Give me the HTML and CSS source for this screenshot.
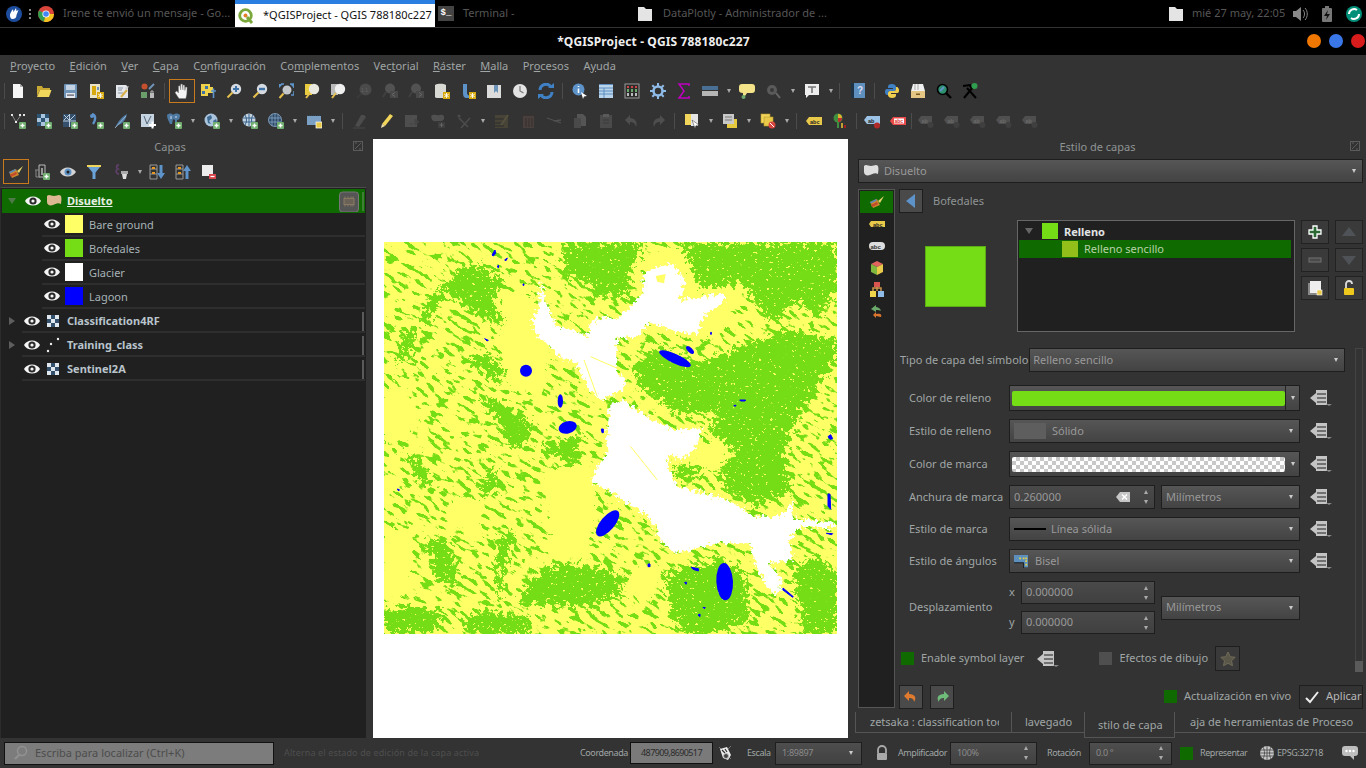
FILE: index.html
```html
<!DOCTYPE html>
<html lang="es">
<head>
  <meta charset="UTF-8">
  <title>*QGISProject - QGIS 788180c227</title>
  <link rel="stylesheet" href="styles.css">
</head>
<body>

<svg class="sprite" xmlns="http://www.w3.org/2000/svg">
  <symbol id="b-plus" viewBox="0 0 16 16"><rect x="9" y="9" width="7" height="7" rx="1" fill="#6fae6f"/><path d="M12.5 10.5v4M10.5 12.5h4" stroke="#fff" stroke-width="1.4"/></symbol>
  <symbol id="b-star" viewBox="0 0 16 16"><rect x="9" y="9" width="7" height="7" fill="#d8a90f"/><path d="M12.5 10v5M10.3 11.2l4.4 2.6M14.7 11.2l-4.4 2.6" stroke="#fff" stroke-width=".9"/></symbol>
  <symbol id="i-new" viewBox="0 0 16 16"><path d="M3 1h7l3 3v11H3z" fill="#f5f5f5"/><path d="M10 1v3h3z" fill="#aaa"/></symbol>
  <symbol id="i-open" viewBox="0 0 16 16"><path d="M1 3h5l1 2h7v2H4l-3 6z" fill="#c9a834"/><path d="M4 7h11.5L13 14H1z" fill="#f1d65c"/></symbol>
  <symbol id="i-save" viewBox="0 0 16 16"><rect x="2" y="1" width="13" height="14" rx="1" fill="#7094b8"/><rect x="4" y="2" width="9" height="5" fill="#c3d3e3"/><rect x="4" y="10" width="9" height="5" fill="#e4e8ec"/><rect x="5" y="11.5" width="7" height="1.2" fill="#556"/></symbol>
  <symbol id="i-layoutnew" viewBox="0 0 16 16"><path d="M2 1h10v14H2z" fill="#e9e3c8"/><path d="M4 3h4v9H4z" fill="#d8a90f"/><path d="M9 4h2v3H9z" fill="#6b93b8"/><use href="#b-star"/></symbol>
  <symbol id="i-layoutman" viewBox="0 0 16 16"><path d="M2 2h10l2 2v11H2z" fill="#e3e6ea"/><path d="M4 5h5M4 7h4M4 10h5" stroke="#8a97a5"/><path d="M7 14l6-7" stroke="#d8b04a" stroke-width="2"/><path d="M11 5l4-2-2 4z" fill="#ccc"/></symbol>
  <symbol id="i-styleman" viewBox="0 0 16 16"><circle cx="4.5" cy="3.5" r="3" fill="#c4502e"/><rect x="1" y="9" width="6" height="6" fill="#6c9e6c"/><path d="M9 6l5-5" stroke="#7094b8" stroke-width="2"/><path d="M10 10h4v5h-4z" fill="#bbb"/><path d="M11 10V8h2v2" fill="none" stroke="#bbb"/></symbol>
  <symbol id="i-hand" viewBox="0 0 16 16"><path d="M5 15.500L1 9.500 2.800 8 4.500 10V3l1.500-.3L6.700 7V1.200L8.300 1 9 7V2l1.500.2.400 5.400.7-3.600 1.500.3-.3 6.700-1 4.500z" fill="#f4f4f4" stroke="#777" stroke-width=".4"/></symbol>
  <symbol id="i-pansel" viewBox="0 0 16 16"><path d="M1 1h9v3h3v6H8v3H1z" fill="#efd44b"/><path d="M5 3h3v3H5zM2 8h3v3H2z" fill="#3f73a8"/><path d="M11 8h5M13.5 5.5V11M13.5 11v4" stroke="#5d93c9" stroke-width="1.6"/></symbol>
  <symbol id="i-zoomin" viewBox="0 0 16 16"><circle cx="10" cy="6" r="5.2" fill="#d5dbe1"/><path d="M6.5 9.5L1.5 14.5" stroke="#e6c04d" stroke-width="2"/><path d="M10 3v6M7 6h6" stroke="#3f73a8" stroke-width="2"/></symbol>
  <symbol id="i-zoomout" viewBox="0 0 16 16"><circle cx="10" cy="6" r="5.2" fill="#d5dbe1"/><path d="M6.5 9.5L1.5 14.5" stroke="#e6c04d" stroke-width="2"/><path d="M7 6h6" stroke="#3f73a8" stroke-width="2.4"/></symbol>
  <symbol id="i-zoomfull" viewBox="0 0 16 16"><circle cx="9" cy="7" r="4.5" fill="#c3c7cb"/><path d="M1 1l4 0-4 4zM16 1v4l-4-4zM16 12v-4" fill="#5d93c9"/><path d="M12 1h4v4M3 1h3M16 8v4h-3" stroke="#5d93c9" stroke-width="1.6" fill="none"/><path d="M5.5 10.5L1.5 15" stroke="#e6c04d" stroke-width="2"/></symbol>
  <symbol id="i-zoomsel" viewBox="0 0 16 16"><path d="M1 1h7v11H1z" fill="#e9cd3f"/><circle cx="10" cy="6" r="5.2" fill="#e9e9e0"/><path d="M6 10l-4 5" stroke="#e6c04d" stroke-width="2"/></symbol>
  <symbol id="i-zoomlayer" viewBox="0 0 16 16"><path d="M1 1h7v11H1z" fill="#bbb"/><circle cx="10" cy="6" r="5.2" fill="#efefef"/><path d="M6 10l-4 5" stroke="#e6c04d" stroke-width="2"/></symbol>
  <symbol id="i-zoom11" viewBox="0 0 16 16"><circle cx="9.5" cy="6.5" r="6" fill="#4a4a4a"/><path d="M5 11l-4 4" stroke="#3a3a3a" stroke-width="2"/><text x="5" y="9" class="tiny">1:1</text></symbol>
  <symbol id="i-zoomprev" viewBox="0 0 16 16"><circle cx="8" cy="5.5" r="5" fill="#525252"/><path d="M4 9l-3 5" stroke="#404040" stroke-width="2"/><rect x="8" y="8" width="8" height="7" fill="#484848"/><path d="M13 9.5l-3 2 3 2" stroke="#666" fill="none"/></symbol>
  <symbol id="i-zoomnext" viewBox="0 0 16 16"><circle cx="8" cy="5.5" r="5" fill="#525252"/><path d="M4 9l-3 5" stroke="#404040" stroke-width="2"/><rect x="8" y="8" width="8" height="7" fill="#484848"/><path d="M11 9.5l3 2-3 2" stroke="#666" fill="none"/></symbol>
  <symbol id="i-mapnew" viewBox="0 0 16 16"><path d="M1 2c4-2 9-1 11 0v13H3c-2 0-2-1-2-2z" fill="#d9d9d4"/><use href="#b-star"/></symbol>
  <symbol id="i-booknew" viewBox="0 0 16 16"><path d="M3 1h4v9c0 2 2 3 5 3v2H7c-3 0-4-2-4-5z" fill="#5d93c9"/><use href="#b-star"/></symbol>
  <symbol id="i-bookshow" viewBox="0 0 16 16"><path d="M1 2h14v13H1z" fill="#dcdcdc"/><path d="M8 2h4v8l-2-2-2 2z" fill="#6b93b8"/></symbol>
  <symbol id="i-clock" viewBox="0 0 16 16"><circle cx="8" cy="8" r="7" fill="#e3e3e3"/><path d="M8 3v5l3.5 2" stroke="#777" fill="none" stroke-width="1.2"/></symbol>
  <symbol id="i-refresh" viewBox="0 0 16 16"><path d="M2 7a6 6 0 0 1 11-3" stroke="#3f81c4" stroke-width="3" fill="none"/><path d="M14 9a6 6 0 0 1-11 3" stroke="#3f81c4" stroke-width="3" fill="none"/><path d="M10 5h6V0zM6 11H0v5z" fill="#3f81c4"/></symbol>
  <symbol id="i-identify" viewBox="0 0 16 16"><circle cx="6.5" cy="6.5" r="6" fill="#5d93c9"/><path d="M6.5 3v1M6.5 5.5V10" stroke="#fff" stroke-width="1.6"/><path d="M9 9l6 4-3 .5-1 2.5z" fill="#fff"/></symbol>
  <symbol id="i-table" viewBox="0 0 16 16"><rect x="1" y="1" width="14" height="14" fill="#b9d3ea"/><path d="M1 1.5h14M1 5h14M1 8h14M1 11h14M6 5v10" stroke="#5d8fbf"/></symbol>
  <symbol id="i-stats" viewBox="0 0 16 16"><rect x="1" y="1" width="14" height="14" fill="#2c2c2c" stroke="#999"/><path d="M4 3v2M8 3v2M12 3v2" stroke="#c44" stroke-width="2"/><path d="M4 6v3M8 6v3M12 6v3" stroke="#6ba86b" stroke-width="2"/><path d="M4 10v3M8 10v3M12 10v3" stroke="#bbb" stroke-width="2"/></symbol>
  <symbol id="i-gear" viewBox="0 0 16 16"><circle cx="8" cy="8" r="4.5" fill="none" stroke="#8fbbe8" stroke-width="2.6"/><path d="M8 0v3M8 13v3M0 8h3M13 8h3M2.3 2.3l2 2M11.7 11.7l2 2M13.7 2.3l-2 2M4.3 11.7l-2 2" stroke="#8fbbe8" stroke-width="2"/></symbol>
  <symbol id="i-sigma" viewBox="0 0 16 16"><path d="M13 3V1H3l5 7-5 7h10v-2" fill="none" stroke="#c000c0" stroke-width="1.5"/></symbol>
  <symbol id="i-ruler" viewBox="0 0 16 16"><rect x="0" y="3" width="16" height="4" fill="#4a6f94"/><rect x="0" y="8" width="16" height="5" fill="#b5b5b5"/></symbol>
  <symbol id="i-tip" viewBox="0 0 16 16"><path d="M3 1h10c2 0 3 1 3 3v3c0 2-1 3-3 3H8l-2 3H4v-3c-3 0-4-1-4-3V4c0-2 1-3 3-3z" fill="#f5e389"/><circle cx="4.5" cy="14" r="2" fill="#6ba86b"/></symbol>
  <symbol id="i-gearoff" viewBox="0 0 16 16"><circle cx="7" cy="7" r="5" fill="#5a5a5a"/><circle cx="7" cy="7" r="2" fill="#383838"/><path d="M11 10l4 5" stroke="#666" stroke-width="2"/></symbol>
  <symbol id="i-note" viewBox="0 0 16 16"><path d="M1 1h14v11H5l-3 3v-3H1z" fill="#eeeeee"/><path d="M4 4h8M8 4v6" stroke="#777" stroke-width="1.6"/></symbol>
  <symbol id="i-help" viewBox="0 0 16 16"><rect x="1" y="0" width="14" height="15" fill="#1f3347"/><rect x="4" y="0" width="11" height="15" fill="#5d8fbf"/><text x="7" y="11" class="helpq">?</text></symbol>
  <symbol id="i-python" viewBox="0 0 16 16"><path d="M8 1c-3 0-4 1-4 3v1h5v1H3C1 6 1 8 1 9s1 3 2 3h1v-2c0-1 1-2 2-2h4c1 0 2-1 2-2V4c0-2-2-3-4-3z" fill="#3f81c4"/><path d="M8 15c3 0 4-1 4-3v-1H7v-1h6c2 0 2-2 2-3s-1-3-2-3h-1v2c0 1-1 2-2 2H6c-1 0-2 1-2 2v2c0 2 2 3 4 3z" fill="#f0cf4e"/></symbol>
  <symbol id="i-plugin" viewBox="0 0 16 16"><path d="M1 8h14v7H1z" fill="#e5c584"/><path d="M3 1h10l2 7H1z" fill="#f0f0f0"/><path d="M5 1v6M8 1v6" stroke="#aaa"/><rect x="6" y="10.5" width="4" height="1.5" fill="#7a5a20"/></symbol>
  <symbol id="i-lens" viewBox="0 0 16 16"><circle cx="6.5" cy="6.5" r="5" fill="#2f8f6f" stroke="#000" stroke-width="1.6"/><path d="M4 8l4-4" stroke="#5d93c9" stroke-width="2"/><path d="M10 10l5 5" stroke="#000" stroke-width="2.4"/></symbol>
  <symbol id="i-tools" viewBox="0 0 16 16"><path d="M2 15L11 4M14 15L5 5" stroke="#000" stroke-width="2"/><path d="M1 3l7-1 1 3" stroke="#000" stroke-width="2" fill="none"/><circle cx="12.5" cy="3" r="3" fill="#2f9f4f"/></symbol>

  <symbol id="i-vnew" viewBox="0 0 16 16"><path d="M2 2l4 7 5-7" stroke="#aaa" fill="none" stroke-width=".7"/><path d="M1 1h2v2H1zM5 8h2v2H5zM9 1h2v2H9zM13 1h2v2h-2z" fill="#e5e5e5"/><use href="#b-plus"/></symbol>
  <symbol id="i-rnew" viewBox="0 0 16 16"><path d="M1 1h4v4H1zM9 1h4v4H9zM5 5h4v4H5zM1 9h4v4H1zM9 9h4v4H9z" fill="#2f5575"/><path d="M5 1h4v4H5zM1 5h4v4H1zM9 5h4v4H9zM5 9h4v4H5z" fill="#a9c4dc"/><use href="#b-plus"/></symbol>
  <symbol id="i-mesh" viewBox="0 0 16 16"><rect x="1" y="1" width="13" height="13" fill="#34506c"/><path d="M1 8h13M7.5 1v13M2 2l5 5M7 2L2 7M8 7l5-5" stroke="#bcd" fill="none"/><use href="#b-plus"/></symbol>
  <symbol id="i-hook" viewBox="0 0 16 16"><path d="M4 1c4 1 4 6 1 10" fill="none" stroke="#5d93c9" stroke-width="2.4"/><circle cx="4" cy="3" r="2" fill="#5d93c9"/><use href="#b-plus"/></symbol>
  <symbol id="i-feather" viewBox="0 0 16 16"><path d="M1 15c2-5 6-11 12-14-1 5-4 10-9 11z" fill="#4e7aa3"/><path d="M1 15L12 3" stroke="#cde" stroke-width=".6"/><use href="#b-plus"/></symbol>
  <symbol id="i-vnewb" viewBox="0 0 16 16"><rect x="1" y="1" width="13" height="13" fill="#c6d4e2"/><path d="M4 3l3 8 4-8" stroke="#567" fill="none"/><path d="M9 12h7M12.5 8.5v7" stroke="#fff" stroke-width="2"/></symbol>
  <symbol id="i-pg" viewBox="0 0 16 16"><path d="M1 2c2-2 5-2 6 0 2-2 5-2 7 0 0 3-1 5-3 5v3H9V7L7 6 6 11H4C3 8 1 6 1 2z" fill="#4e7aa3"/><path d="M5 3v3M10 3v2" stroke="#cde"/><use href="#b-plus"/></symbol>
  <symbol id="i-globe" viewBox="0 0 16 16"><circle cx="7" cy="7" r="6.5" fill="#a9c4dc"/><path d="M3 4l4-2 1 3-3 3 2 3-3-1zM9 8l3-2 1 3-2 3z" fill="#3f6a92"/><use href="#b-plus"/></symbol>
  <symbol id="i-wms" viewBox="0 0 16 16"><circle cx="7" cy="7" r="6.5" fill="#c6d4e2"/><path d="M1 5h12M1 9h12M7 1v12M3 2c2 3 2 7 0 10M11 2c-2 3-2 7 0 10" stroke="#35608a" fill="none"/><use href="#b-plus"/></symbol>
  <symbol id="i-wcs" viewBox="0 0 16 16"><circle cx="7" cy="7" r="6.5" fill="#2e4a66" stroke="#8fb0d0" stroke-width=".8"/><path d="M1 5h12M1 9h12M4 1v12M7 1v12M10 1v12" stroke="#8fb0d0" stroke-width=".7"/><use href="#b-plus"/></symbol>
  <symbol id="i-temp" viewBox="0 0 16 16"><rect x="1" y="3" width="14" height="9" fill="#7c9fc4"/><path d="M1 2.500h14" stroke="#345" stroke-dasharray="1 1"/><rect x="10" y="9" width="6" height="6" fill="#e9c94a" stroke="#fff" stroke-width=".7"/></symbol>
  <symbol id="i-editall" viewBox="0 0 16 16"><path d="M3 13L9 2h3l2 2-7 10z" fill="#4c4c4c"/><path d="M1 15h12" stroke="#424242" stroke-width="1.5"/></symbol>
  <symbol id="i-pencil" viewBox="0 0 16 16"><path d="M4 11L12 1l3 2-8 10z" fill="#f2d65c"/><path d="M4 11l-1 4 4-2z" fill="#f0e0b0"/></symbol>
  <symbol id="i-saveedit" viewBox="0 0 16 16"><rect x="1" y="2" width="12" height="12" fill="#4e4e4e"/><path d="M11 6l4 3-4 3zM5 11h4" fill="#444" stroke="#444"/></symbol>
  <symbol id="i-addpoly" viewBox="0 0 16 16"><path d="M1 3c3-3 6 0 9-1s5 1 4 4-5 2-6 2-4 1-6-1z" fill="#505050"/><rect x="8" y="9" width="7" height="6" fill="#3e3e3e"/><path d="M11.500 10v4M9.500 12h4" stroke="#666"/></symbol>
  <symbol id="i-vtool" viewBox="0 0 16 16"><path d="M5 15L14 5M3 5l9 9" stroke="#4c4c4c" stroke-width="1.6"/><circle cx="3" cy="3" r="1.500" fill="#4c4c4c"/></symbol>
  <symbol id="i-multi" viewBox="0 0 16 16"><rect x="1" y="2" width="13" height="13" fill="#474337"/><path d="M1 6h9M1 10h7M1 13h9" stroke="#2c2c2c"/><path d="M7 12L14 2" stroke="#55513f" stroke-width="2"/></symbol>
  <symbol id="i-trash" viewBox="0 0 16 16"><rect x="3" y="3" width="11" height="12" fill="#493f3c"/><path d="M1 2h14M6 5v9M9 5v9M12 5v9" stroke="#3a3230" stroke-width="1.200"/></symbol>
  <symbol id="i-cut" viewBox="0 0 16 16"><path d="M1 5l14 5M8 8l7-1" stroke="#505050" stroke-width="1.300"/></symbol>
  <symbol id="i-copy" viewBox="0 0 16 16"><path d="M5 1h6l3 3v9H5z" fill="#555"/><path d="M2 5h7v10H2z" fill="#4a4a4a"/></symbol>
  <symbol id="i-paste" viewBox="0 0 16 16"><rect x="2" y="2" width="12" height="13" fill="#4a4a4a"/><rect x="5" y="1" width="6" height="3" fill="#5a5a5a"/><path d="M5 7h6M5 10h6" stroke="#3a3a3a"/></symbol>
  <symbol id="i-undooff" viewBox="0 0 16 16"><path d="M6 2L1 7l5 5V9c3 0 5 1 6 5 2-5-1-9-6-9z" fill="#4e4e4e"/></symbol>
  <symbol id="i-redooff" viewBox="0 0 16 16"><path d="M10 2l5 5-5 5V9c-3 0-5 1-6 5-2-5 1-9 6-9z" fill="#4e4e4e"/></symbol>
  <symbol id="i-selrect" viewBox="0 0 16 16"><rect x="1" y="1" width="10" height="11" fill="#f2d65c"/><rect x="7" y="1" width="7" height="12" fill="#e5e5e5"/><path d="M8 7l7 5-3 .5-1 3z" fill="#fff" stroke="#333" stroke-width=".5"/></symbol>
  <symbol id="i-selval" viewBox="0 0 16 16"><rect x="5" y="6" width="10" height="9" fill="#e4c83e"/><rect x="1" y="1" width="11" height="10" fill="#c8c8c8"/><path d="M3 4h7M3 7h7" stroke="#777"/></symbol>
  <symbol id="i-desel" viewBox="0 0 16 16"><rect x="1" y="1" width="9" height="9" fill="#f2d65c" stroke="#b59a2a" stroke-width=".6"/><rect x="4" y="4" width="9" height="9" fill="#e9c94a" stroke="#b59a2a" stroke-width=".6"/><circle cx="12" cy="12" r="3.500" fill="#d9453f"/><path d="M10 10l4 4" stroke="#fff"/></symbol>
  <symbol id="i-lblcfg" viewBox="0 0 16 16"><path d="M0 8l3-4h13v8H3z" fill="#e9c94a"/><text x="4" y="10.500" class="tinyb">abc</text></symbol>
  <symbol id="i-diagram" viewBox="0 0 16 16"><circle cx="6" cy="5" r="4.500" fill="#3f8f3f"/><path d="M6 5V1a4 4 0 0 1 4 4z" fill="#e0b030"/><path d="M6 5h4a4 4 0 0 1-4 4z" fill="#c03030"/><path d="M5 9h2v6H5z" fill="#3f8f3f"/><path d="M9 10h2v5H9z" fill="#c0a030"/><path d="M12 12h2v3h-2z" fill="#a02020"/></symbol>
  <symbol id="i-lblpin" viewBox="0 0 16 16"><path d="M0 7l3-4h13v8H3z" fill="#9cc2e6"/><text x="4" y="9.500" class="tinyb">ab</text><circle cx="13" cy="12.500" r="3" fill="#b02a2a"/></symbol>
  <symbol id="i-lblred" viewBox="0 0 16 16"><path d="M0 8l3-4h13v8H3z" fill="#ea4a4a"/><rect x="4" y="5.500" width="10" height="5" fill="#fff"/><text x="4.500" y="10" class="tinyr">abc</text></symbol>
  <symbol id="i-lbloff" viewBox="0 0 16 16"><path d="M0 7l3-4h11v8H3z" fill="#4f4f4f"/><text x="3.500" y="9.500" class="tinyd">ab</text><circle cx="12.500" cy="12" r="3" fill="#3f3f3f"/></symbol>
  <symbol id="i-layerbrush" viewBox="0 0 16 16"><path d="M1 8l7-3 3 6-7 3z" fill="#c8862f"/><path d="M2 11l6-3 1 2-6 3z" fill="#c24a2a"/><path d="M1 8l6-3 .8 1.600-6 3z" fill="#5d86b4"/><path d="M9 7l6-5-4 7z" fill="#e6d26a"/></symbol>
  <symbol id="i-addgroup" viewBox="0 0 16 16"><path d="M5 1h6v12H5z" fill="none" stroke="#bbb"/><path d="M1 6h4M2 6v7h4" stroke="#888" fill="none"/><path d="M7 4h2v7H7z" fill="#999"/><use href="#b-plus"/></symbol>
  <symbol id="i-eyeblue" viewBox="0 0 16 16"><path d="M0 8c3-6 12-6 16 0-4 6-13 6-16 0z" fill="#d4d4d4"/><circle cx="8" cy="8" r="3.500" fill="#5d93c9"/><circle cx="8" cy="8" r="1.500" fill="#222"/></symbol>
  <symbol id="i-funnel" viewBox="0 0 16 16"><rect x="1" y="1" width="14" height="2" fill="#f1d65c"/><path d="M2 3h12L9.500 8.500V15h-3V8.500z" fill="#6ba3d8"/></symbol>
  <symbol id="i-filteroff" viewBox="0 0 16 16"><path d="M6 1C3 1 3 4 5 5 2 6 3 10 6 10" fill="none" stroke="#5c3f66" stroke-width="1.800"/><rect x="8" y="7" width="7" height="3" fill="#aaa"/><path d="M9 10h5l-1 5h-3z" fill="#ddd"/></symbol>
  <symbol id="i-expand" viewBox="0 0 16 16"><path d="M1 1h7v14H1z" fill="none" stroke="#999"/><path d="M1 5h7M1 10h7" stroke="#999"/><path d="M3 3h3v2H3zM3 8h3v2H3z" fill="#e89a20"/><path d="M12 1v9" stroke="#5d93c9" stroke-width="3"/><path d="M8 9h8l-4 6z" fill="#5d93c9"/></symbol>
  <symbol id="i-collapse" viewBox="0 0 16 16"><path d="M1 1h7v14H1z" fill="none" stroke="#999"/><path d="M1 5h7M1 10h7" stroke="#999"/><path d="M3 3h3v2H3zM3 8h3v2H3z" fill="#e89a20"/><path d="M12 6v9" stroke="#5d93c9" stroke-width="3"/><path d="M8 7h8l-4-6z" fill="#5d93c9"/></symbol>
  <symbol id="i-remove" viewBox="0 0 16 16"><rect x="1" y="1" width="11" height="11" fill="#ececec"/><rect x="8" y="10" width="7" height="5" fill="#d9454f"/><path d="M9.500 12.500h4" stroke="#fff" stroke-width="1.200"/></symbol>
  <symbol id="i-undock" viewBox="0 0 10 10"><rect x=".5" y=".5" width="9" height="9" fill="none" stroke="#5c5c5c"/><path d="M2 8l6-6M2 2h2M8 8H6" stroke="#5c5c5c"/></symbol>
  <symbol id="i-eye" viewBox="0 0 16 16"><path d="M0 8c3-6 13-6 16 0-3 6-13 6-16 0z" fill="#f5f5f5"/><circle cx="8" cy="8" r="3.600" fill="#2a2a2a"/><circle cx="8" cy="8" r="1.600" fill="#f5f5f5"/></symbol>
  <symbol id="i-poly" viewBox="0 0 16 16"><path d="M1 3c2-2 4 0 7 0s5-2 7 0c1 3 0 6 0 8-3-2-6 0-8 1-3 1-6 0-6-3z" fill="currentColor"/></symbol>
  <symbol id="i-raster" viewBox="0 0 16 16"><path d="M2 2h4v4H2zM10 2h4v4h-4zM6 6h4v4H6zM2 10h4v4H2zM10 10h4v4h-4z" fill="#dfe7ef"/><path d="M6 2h4v4H6zM2 6h4v4H2zM10 6h4v4h-4zM6 10h4v4H6z" fill="#35506c"/></symbol>
  <symbol id="i-points" viewBox="0 0 16 16"><circle cx="3" cy="14" r="1.200" fill="#eee"/><circle cx="6" cy="7" r="1.200" fill="#eee"/><circle cx="13" cy="2" r="1.200" fill="#eee"/></symbol>
  <symbol id="i-memory" viewBox="0 0 20 20"><rect x=".5" y=".5" width="19" height="20" rx="3" fill="#555" stroke="#777"/><rect x="5" y="7" width="10" height="6" fill="#6b6257" stroke="#8a7a63"/><path d="M6 5v2M9 5v2M12 5v2M14 5v2M6 13v2M9 13v2M12 13v2M14 13v2" stroke="#8a7a63"/></symbol>

  <symbol id="i-labels" viewBox="0 0 16 16"><path d="M0 8l2-3h14v6H2z" fill="#e9c94a"/><text x="4" y="10.500" class="tinyb">abc</text></symbol>
  <symbol id="i-mask" viewBox="0 0 16 16"><rect x="0" y="4" width="16" height="8" rx="4" fill="#ddd"/><text x="1.500" y="11" class="tinym">abc</text></symbol>
  <symbol id="i-cube" viewBox="0 0 16 16"><path d="M8 1l6 3-6 3-6-3z" fill="#e0655f"/><path d="M2 4l6 3v8l-6-3z" fill="#7fb83c"/><path d="M14 4L8 7v8l6-3z" fill="#e9c94a"/></symbol>
  <symbol id="i-tree" viewBox="0 0 16 16"><rect x="5" y="0" width="6" height="5" fill="#d9554f"/><path d="M4 9V6h8v3M8 5v4" stroke="#c9944a" fill="none" stroke-width="1.500"/><rect x="1" y="9" width="6" height="6" fill="#efd44b"/><rect x="9" y="9" width="6" height="6" fill="#8fbbe8"/></symbol>
  <symbol id="i-undored" viewBox="0 0 16 16"><path d="M7 1L2 5l5 3V6c2 0 4 0 5 1-1-3-3-4-5-4z" fill="#6ba86b"/><path d="M7 8l-3 3 3 3v-2c2 0 3 1 5 1 1-2 0-4-5-3z" fill="#d9752f"/></symbol>
  <symbol id="i-back" viewBox="0 0 16 16"><path d="M12 1v14L3 8z" fill="#5d93c9"/></symbol>
  <symbol id="i-plusw" viewBox="0 0 16 16"><path d="M6 2h4v4h4v4h-4v4H6v-4H2V6h4z" fill="#2a6b35" stroke="#fff" stroke-width="1.300"/></symbol>
  <symbol id="i-minusg" viewBox="0 0 16 16"><rect x="2" y="6" width="12" height="4" fill="#4a4a4a" stroke="#707070"/></symbol>
  <symbol id="i-up" viewBox="0 0 16 16"><path d="M8 3l7 9H1z" fill="#4f5358"/></symbol>
  <symbol id="i-down" viewBox="0 0 16 16"><path d="M8 13L1 4h14z" fill="#4f5358"/></symbol>
  <symbol id="i-dup" viewBox="0 0 16 16"><rect x="1" y="3" width="11" height="12" fill="#888"/><rect x="3" y="1" width="11" height="12" fill="#eee"/><rect x="10" y="10" width="5" height="5" fill="#e9c94a" stroke="#fff" stroke-width=".6"/></symbol>
  <symbol id="i-lock" viewBox="0 0 16 16"><path d="M5 8V4a3 3 0 0 1 6 0" fill="none" stroke="#ddd" stroke-width="1.800"/><rect x="3" y="8" width="10" height="7" rx="1" fill="#efc81e"/></symbol>
  <symbol id="i-dd" viewBox="0 0 23 16"><path d="M1 8l6-5V0h11v15H7v-2z" fill="#c4c4c4"/><path d="M8 4h9M8 8h9M8 12h9" stroke="#555" stroke-width="1.300"/><path d="M17 14h6l-3 2z" fill="#888"/></symbol>
  <symbol id="i-clear" viewBox="0 0 14 10"><path d="M0 5l4-5h10v10H4z" fill="#c6c6c6"/><path d="M6 2.500l5 5M11 2.500l-5 5" stroke="#fff" stroke-width="1.500"/></symbol>
  <symbol id="i-bevel" viewBox="0 0 16 16"><path d="M0 1h16v14h-5v-5H0z" fill="#5d8fbf"/><path d="M0 10h11v6" stroke="#111" fill="none"/><path d="M6 4h2v2H6zM10 4h2v2h-2zM13 4h2v2h-2zM13 7h2v2h-2zM13 11h2v2h-2z" fill="#e9d23e"/></symbol>
  <symbol id="i-star" viewBox="0 0 16 16"><path d="M8 1l2.200 4.700 5 .6-3.700 3.400 1 5L8 12.300l-4.500 2.400 1-5L.8 6.300l5-.6z" fill="#5b5748" stroke="#706b58"/></symbol>
  <symbol id="i-undo" viewBox="0 0 16 16"><path d="M6 2L1 7l5 5V9c3 0 5 1 5 4 3-4 1-8-5-8z" fill="#e07a2f"/></symbol>
  <symbol id="i-redo" viewBox="0 0 16 16"><path d="M10 2l5 5-5 5V9c-3 0-5 1-5 4-3-4-1-8 5-8z" fill="#6fbb7a"/></symbol>
  <symbol id="i-check" viewBox="0 0 16 16"><path d="M2 9l4 4 8-10" fill="none" stroke="#eee" stroke-width="2"/></symbol>
  <symbol id="i-search" viewBox="0 0 16 16"><circle cx="9" cy="6" r="4.500" fill="none" stroke="#929292" stroke-width="1.500"/><path d="M6 10l-4 4" stroke="#929292" stroke-width="2"/></symbol>
  <symbol id="i-mouse" viewBox="0 0 16 16"><path d="M2 2l12 12M14 1L9 6" stroke="#777"/><path d="M3 4l7-2 4 8-3 5-5-2z" fill="#ececec"/><path d="M5 5l3 3M8 4l2 3" stroke="#333" stroke-width="1.200"/><circle cx="9" cy="11" r="2.500" fill="#444" stroke="#bbb"/></symbol>
  <symbol id="i-padlock" viewBox="0 0 16 16"><path d="M4 8V5a4 4 0 0 1 8 0v3" fill="none" stroke="#a9a9a9" stroke-width="1.800"/><rect x="3" y="8" width="10" height="7" rx="1" fill="#a9a9a9"/></symbol>
  <symbol id="i-epsg" viewBox="0 0 16 16"><circle cx="8" cy="8" r="7" fill="#c8c8c8"/><path d="M1 5h14M1 8h14M1 11h14M8 1v14M4 2c2 4 2 8 0 12M12 2c-2 4-2 8 0 12" stroke="#444" fill="none" stroke-width=".8"/></symbol>
  <symbol id="i-chat" viewBox="0 0 16 16"><path d="M3 1h10c2 0 3 1 3 3v4c0 2-1 3-3 3h-1v4l-4-4H3c-2 0-3-1-3-3V4c0-2 1-3 3-3z" fill="#bdbdbd"/><circle cx="4.500" cy="6" r="1.200" fill="#fff"/><circle cx="8" cy="6" r="1.200" fill="#fff"/><circle cx="11.500" cy="6" r="1.200" fill="#fff"/></symbol>

  <symbol id="i-kde" viewBox="0 0 16 16"><circle cx="8" cy="8" r="8" fill="#1d4e9e"/><path d="M4 9c0-2 3-6 3-6l.5 3L10 2l.5 3 2-1-2 5c0 3-2 4-4 4S4 11 4 9z" fill="#fff"/></symbol>
  <symbol id="i-chrome" viewBox="0 0 16 16"><circle cx="8" cy="8" r="8" fill="#d9453a"/><path d="M8 8L1 4.500A8 8 0 0 0 6 15.800z" fill="#2f9e4f"/><path d="M8 8h8a8 8 0 0 1-10 7.800z" fill="#f4c320"/><circle cx="8" cy="8" r="3.600" fill="#fff"/><circle cx="8" cy="8" r="2.800" fill="#4285f4"/></symbol>
  <symbol id="i-qgis" viewBox="0 0 16 16"><circle cx="7.500" cy="7.500" r="5.800" fill="none" stroke="#7aa83a" stroke-width="2.800"/><circle cx="7.500" cy="7.500" r="2" fill="#e3802a"/><path d="M9 9l5 6" stroke="#7aa83a" stroke-width="2.800"/></symbol>
  <symbol id="i-folder" viewBox="0 0 16 16"><path d="M1 1h6l2 2h6v12H1z" fill="#e4e4e4"/></symbol>
  <symbol id="i-speaker" viewBox="0 0 16 16"><path d="M1 5h3l5-4v14l-5-4H1z" fill="#888"/><path d="M11 4c2 2 2 6 0 8M13 2c3 3 3 9 0 12" stroke="#888" fill="none"/></symbol>
  <symbol id="i-battery" viewBox="0 0 16 16"><rect x="3" y="2" width="10" height="14" rx="1" fill="#777"/><rect x="6" y="0" width="4" height="2" fill="#777"/><path d="M9 4L5 10h3l-1 4 4-6H8z" fill="#111"/></symbol>
  <symbol id="i-net" viewBox="0 0 16 16"><circle cx="8" cy="8" r="8" fill="#00907a"/><path d="M3 8a5 5 0 0 1 8-4M13 8a5 5 0 0 1-8 4" fill="none" stroke="#fff" stroke-width="2"/></symbol>
</svg>

<div class="taskbar">
  <svg class="i tk-kde"><use href="#i-kde"/></svg>
  <span class="tk-dots"></span>
  <svg class="i tk-chrome"><use href="#i-chrome"/></svg>
  <span class="tk-text tk-goog">Irene te envió un mensaje - Go...</span>
  <div class="tk-active">
    <svg class="i"><use href="#i-qgis"/></svg>
    <span>*QGISProject - QGIS 788180c227</span>
  </div>
  <span class="tk-term">$_</span>
  <span class="tk-text tk-termtxt">Terminal -</span>
  <svg class="i tk-fold"><use href="#i-folder"/></svg>
  <span class="tk-text tk-data">DataPlotly - Administrador de ...</span>
  <svg class="i tk-fold2"><use href="#i-folder"/></svg>
  <span class="tk-text tk-clock">mié 27 may, 22:05</span>
  <svg class="i tk-spk"><use href="#i-speaker"/></svg>
  <svg class="i tk-bat"><use href="#i-battery"/></svg>
  <svg class="i tk-net"><use href="#i-net"/></svg>
</div>

<div class="titlebar">
  <span class="title">*QGISProject - QGIS 788180c227</span>
  <div class="winbtns">
    <span class="dot dot-o"></span>
    <span class="dot dot-b"></span>
    <span class="dot dot-r"></span>
  </div>
</div>

<div class="menubar">
  <span><u>P</u>royecto</span>
  <span><u>E</u>dición</span>
  <span><u>V</u>er</span>
  <span><u>C</u>apa</span>
  <span>C<u>o</u>nfiguración</span>
  <span>Co<u>m</u>plementos</span>
  <span>Vec<u>t</u>orial</span>
  <span><u>R</u>áster</span>
  <span><u>M</u>alla</span>
  <span>Pr<u>o</u>cesos</span>
  <span>A<u>y</u>uda</span>
</div>

<div class="toolbar tb-one">
  <span class="tb-sep"></span>
  <span class="tb"><svg class="i"><use href="#i-new"/></svg></span>
  <span class="tb"><svg class="i"><use href="#i-open"/></svg></span>
  <span class="tb"><svg class="i"><use href="#i-save"/></svg></span>
  <span class="tb"><svg class="i"><use href="#i-layoutnew"/></svg></span>
  <span class="tb"><svg class="i"><use href="#i-layoutman"/></svg></span>
  <span class="tb"><svg class="i"><use href="#i-styleman"/></svg></span>
  <span class="tb-sep"></span>
  <span class="tb tb-on"><svg class="i"><use href="#i-hand"/></svg></span>
  <span class="tb"><svg class="i"><use href="#i-pansel"/></svg></span>
  <span class="tb"><svg class="i"><use href="#i-zoomin"/></svg></span>
  <span class="tb"><svg class="i"><use href="#i-zoomout"/></svg></span>
  <span class="tb"><svg class="i"><use href="#i-zoomfull"/></svg></span>
  <span class="tb"><svg class="i"><use href="#i-zoomsel"/></svg></span>
  <span class="tb"><svg class="i"><use href="#i-zoomlayer"/></svg></span>
  <span class="tb"><svg class="i"><use href="#i-zoom11"/></svg></span>
  <span class="tb"><svg class="i"><use href="#i-zoomprev"/></svg></span>
  <span class="tb"><svg class="i"><use href="#i-zoomnext"/></svg></span>
  <span class="tb"><svg class="i"><use href="#i-mapnew"/></svg></span>
  <span class="tb"><svg class="i"><use href="#i-booknew"/></svg></span>
  <span class="tb"><svg class="i"><use href="#i-bookshow"/></svg></span>
  <span class="tb"><svg class="i"><use href="#i-clock"/></svg></span>
  <span class="tb"><svg class="i"><use href="#i-refresh"/></svg></span>
  <span class="tb-sep"></span>
  <span class="tb"><svg class="i"><use href="#i-identify"/></svg></span>
  <span class="tb"><svg class="i"><use href="#i-table"/></svg></span>
  <span class="tb"><svg class="i"><use href="#i-stats"/></svg></span>
  <span class="tb"><svg class="i"><use href="#i-gear"/></svg></span>
  <span class="tb"><svg class="i"><use href="#i-sigma"/></svg></span>
  <span class="tb"><svg class="i"><use href="#i-ruler"/></svg></span>
  <span class="tb-arr"></span>
  <span class="tb"><svg class="i"><use href="#i-tip"/></svg></span>
  <span class="tb"><svg class="i"><use href="#i-gearoff"/></svg></span>
  <span class="tb-arr tb-arr-13"></span>
  <span class="tb"><svg class="i"><use href="#i-note"/></svg></span>
  <span class="tb-arr"></span>
  <span class="tb-sep tb-sep-9"></span>
  <span class="tb"><svg class="i"><use href="#i-help"/></svg></span>
  <span class="tb-sep"></span>
  <span class="tb"><svg class="i"><use href="#i-python"/></svg></span>
  <span class="tb"><svg class="i"><use href="#i-plugin"/></svg></span>
  <span class="tb"><svg class="i"><use href="#i-lens"/></svg></span>
  <span class="tb"><svg class="i"><use href="#i-tools"/></svg></span>
</div>

<div class="toolbar tb-two">
  <span class="tb-sep"></span>
  <span class="tb"><svg class="i"><use href="#i-vnew"/></svg></span>
  <span class="tb"><svg class="i"><use href="#i-rnew"/></svg></span>
  <span class="tb"><svg class="i"><use href="#i-mesh"/></svg></span>
  <span class="tb"><svg class="i"><use href="#i-hook"/></svg></span>
  <span class="tb"><svg class="i"><use href="#i-feather"/></svg></span>
  <span class="tb"><svg class="i"><use href="#i-vnewb"/></svg></span>
  <span class="tb"><svg class="i"><use href="#i-pg"/></svg></span>
  <span class="tb-arr"></span>
  <span class="tb"><svg class="i"><use href="#i-globe"/></svg></span>
  <span class="tb-arr"></span>
  <span class="tb"><svg class="i"><use href="#i-wms"/></svg></span>
  <span class="tb"><svg class="i"><use href="#i-wcs"/></svg></span>
  <span class="tb-arr"></span>
  <span class="tb"><svg class="i"><use href="#i-temp"/></svg></span>
  <span class="tb-arr"></span>
  <span class="tb-sep"></span>
  <span class="tb"><svg class="i"><use href="#i-editall"/></svg></span>
  <span class="tb"><svg class="i"><use href="#i-pencil"/></svg></span>
  <span class="tb"><svg class="i"><use href="#i-saveedit"/></svg></span>
  <span class="tb"><svg class="i"><use href="#i-addpoly"/></svg></span>
  <span class="tb"><svg class="i"><use href="#i-vtool"/></svg></span>
  <span class="tb-arr"></span>
  <span class="tb"><svg class="i"><use href="#i-multi"/></svg></span>
  <span class="tb"><svg class="i"><use href="#i-trash"/></svg></span>
  <span class="tb"><svg class="i"><use href="#i-cut"/></svg></span>
  <span class="tb"><svg class="i"><use href="#i-copy"/></svg></span>
  <span class="tb"><svg class="i"><use href="#i-paste"/></svg></span>
  <span class="tb"><svg class="i"><use href="#i-undooff"/></svg></span>
  <span class="tb"><svg class="i"><use href="#i-redooff"/></svg></span>
  <span class="tb-sep"></span>
  <span class="tb"><svg class="i"><use href="#i-selrect"/></svg></span>
  <span class="tb-arr"></span>
  <span class="tb"><svg class="i"><use href="#i-selval"/></svg></span>
  <span class="tb-arr"></span>
  <span class="tb"><svg class="i"><use href="#i-desel"/></svg></span>
  <span class="tb-arr"></span>
  <span class="tb-sep"></span>
  <span class="tb"><svg class="i"><use href="#i-lblcfg"/></svg></span>
  <span class="tb"><svg class="i"><use href="#i-diagram"/></svg></span>
  <span class="tb-sep tb-sep-thin"></span>
  <span class="tb"><svg class="i"><use href="#i-lblpin"/></svg></span>
  <span class="tb"><svg class="i"><use href="#i-lblred"/></svg></span>
  <span class="tb-sep tb-sep-2"></span>
  <span class="tb"><svg class="i"><use href="#i-lbloff"/></svg></span>
  <span class="tb"><svg class="i"><use href="#i-lbloff"/></svg></span>
  <span class="tb"><svg class="i"><use href="#i-lbloff"/></svg></span>
  <span class="tb"><svg class="i"><use href="#i-lbloff"/></svg></span>
  <span class="tb"><svg class="i"><use href="#i-lbloff"/></svg></span>
</div>

<div class="main">
  <section class="layers">
    <div class="dock-title">
      <span>Capas</span>
      <svg class="undock"><use href="#i-undock"/></svg>
    </div>
    <div class="layer-tools">
      <span class="tb tb-on"><svg class="i"><use href="#i-layerbrush"/></svg></span>
      <span class="tb"><svg class="i"><use href="#i-addgroup"/></svg></span>
      <span class="tb"><svg class="i"><use href="#i-eyeblue"/></svg></span>
      <span class="tb"><svg class="i"><use href="#i-funnel"/></svg></span>
      <span class="tb tb-wide"><svg class="i"><use href="#i-filteroff"/></svg></span>
      <span class="tb-arr tb-arr-s"></span>
      <span class="tb"><svg class="i"><use href="#i-expand"/></svg></span>
      <span class="tb"><svg class="i"><use href="#i-collapse"/></svg></span>
      <span class="tb"><svg class="i"><use href="#i-remove"/></svg></span>
    </div>
    <div class="tree">
      <div class="row row-sel">
        <span class="twist twist-open"></span>
        <svg class="i eye"><use href="#i-eye"/></svg>
        <svg class="i ly-icon poly-tan"><use href="#i-poly"/></svg>
        <span class="ly-name ly-cur">Disuelto</span>
        <svg class="memory"><use href="#i-memory"/></svg>
        <span class="ind"></span>
      </div>
      <div class="row row-child">
        <svg class="i eye"><use href="#i-eye"/></svg>
        <span class="sw sw-yellow"></span>
        <span class="ly-sub">Bare ground</span>
      </div>
      <div class="row row-child">
        <svg class="i eye"><use href="#i-eye"/></svg>
        <span class="sw sw-green"></span>
        <span class="ly-sub">Bofedales</span>
      </div>
      <div class="row row-child">
        <svg class="i eye"><use href="#i-eye"/></svg>
        <span class="sw sw-white"></span>
        <span class="ly-sub">Glacier</span>
      </div>
      <div class="row row-child">
        <svg class="i eye"><use href="#i-eye"/></svg>
        <span class="sw sw-blue"></span>
        <span class="ly-sub">Lagoon</span>
      </div>
      <div class="row row-top">
        <span class="twist"></span>
        <svg class="i eye"><use href="#i-eye"/></svg>
        <svg class="i ly-icon"><use href="#i-raster"/></svg>
        <span class="ly-name">Classification4RF</span>
        <span class="ind"></span>
      </div>
      <div class="row row-top">
        <span class="twist"></span>
        <svg class="i eye"><use href="#i-eye"/></svg>
        <svg class="i ly-icon"><use href="#i-points"/></svg>
        <span class="ly-name">Training_class</span>
        <span class="ind"></span>
      </div>
      <div class="row row-top">
        <span class="twist twist-none"></span>
        <svg class="i eye"><use href="#i-eye"/></svg>
        <svg class="i ly-icon"><use href="#i-raster"/></svg>
        <span class="ly-name">Sentinel2A</span>
        <span class="ind"></span>
      </div>
    </div>
  </section>

  <section class="canvas">
    <svg class="map" viewBox="0 6 1359 1176" xmlns="http://www.w3.org/2000/svg">
      <defs>
        <filter id="speckle" x="0" y="0" width="100%" height="100%" color-interpolation-filters="sRGB">
          <feTurbulence type="fractalNoise" baseFrequency=".028 .07" numOctaves="5" seed="11"/>
          <feColorMatrix type="matrix" values="0 0 0 0 .46  0 0 0 0 .866  0 0 0 0 .08  16 0 0 0 -9.100"/>
        </filter>
        <filter id="rough" x="-8%" y="-8%" width="116%" height="116%" color-interpolation-filters="sRGB">
          <feTurbulence type="fractalNoise" baseFrequency=".07" numOctaves="4" seed="4" result="n"/>
          <feDisplacementMap in="SourceGraphic" in2="n" scale="70" xChannelSelector="R" yChannelSelector="G" result="d"/>
          <feTurbulence type="fractalNoise" baseFrequency=".09 .14" numOctaves="3" seed="21"/>
          <feColorMatrix type="matrix" values="0 0 0 0 0  0 0 0 0 0  0 0 0 0 0  18 0 0 0 -12.300" result="holes"/>
          <feComposite in="d" in2="holes" operator="out"/>
        </filter>
        <filter id="roughw" x="-5%" y="-5%" width="110%" height="110%" color-interpolation-filters="sRGB">
          <feTurbulence type="fractalNoise" baseFrequency=".09" numOctaves="3" seed="8" result="n"/>
          <feDisplacementMap in="SourceGraphic" in2="n" scale="34" xChannelSelector="R" yChannelSelector="G"/>
        </filter>
      </defs>
      <rect class="m-y" x="0" y="0" width="1359" height="1185"/>
      <rect x="-500" y="-500" width="2400" height="2200" transform="rotate(32 680 590)" filter="url(#speckle)"/>
      <path class="m-y" filter="url(#roughw)" d="M330 150L450 170 500 340 470 470 380 450 340 300zM480 700L620 660 640 800 600 960 500 950zM200 780L300 770 290 880 190 860zM900 620L1040 600 1000 700 860 670zM780 50L900 10 1100 120 1000 300 800 280zM0 500L30 420 120 560 0 620zM750 980L840 980 800 1090 730 1040zM0 860L90 880 80 1060 0 1080z"/>
      <g class="m-g" filter="url(#rough)">
        <path d="M240 70L300 80 350 120 330 180 360 260 300 230 230 190 190 150 130 250 105 235 140 170 200 120z"/>
        <path d="M40 370L70 350 100 290 80 255 50 310z"/>
        <path d="M540 10L780 10 740 80 730 170 640 170 620 130 540 100z"/>
        <path d="M890 10L1359 10 1359 130 1300 240 1250 180 1150 240 1110 170 1070 130 950 150z"/>
        <path d="M740 380L830 320 940 370 1000 350 1100 310 1200 270 1359 300 1359 360 1300 440 1240 530 1200 640 1220 750 1120 800 1040 760 1000 700 1060 630 980 580 1000 520 880 520 780 450z"/>
        <path d="M400 1090L470 990 560 970 710 1000 720 1060 600 1100z"/>
        <path d="M840 1000L1000 960 1080 1000 1100 1140 1000 1180 900 1180 860 1100z"/>
        <path d="M0 1110L100 1100 180 1120 150 1180 0 1180z"/>
        <path d="M240 1150L300 1110 430 1130 430 1180 240 1180z"/>
        <path d="M1230 990L1290 950 1359 990 1359 1180 1260 1180z"/>
        <path d="M460 620L600 590 560 680 520 650z"/>
        <path d="M280 470L360 490 450 560 420 620 380 620 340 540z"/>
        <path d="M250 350L310 340 360 390 340 430 290 390z"/>
        <path d="M280 740L330 680 340 720 380 730 310 760z"/>
        <path d="M340 900L390 870 370 960 350 1070 340 1060z"/>
        <path d="M130 900L190 900 220 990 210 1040 150 1010z"/>
        <path d="M60 640L110 660 150 740 110 730z"/>
        <path d="M860 680L960 680 940 720 880 710z"/>
      </g>
      <g class="m-w" filter="url(#roughw)">
        <path d="M445 240L465 200 470 120 490 200 520 260 560 270 610 290 620 250 660 228 700 240 750 190 775 160 780 95 865 70 905 125 885 180 960 170 1020 160 1020 190 960 225 945 280 870 275 800 245 760 290 700 295 695 390 730 430 700 460 650 480 610 440 590 400 575 370 540 360 500 320 450 280z"/>
        <path d="M670 560L680 490 720 480 790 530 870 570 958 565 930 630 890 660 860 640 850 680 880 740 1000 770 1050 790 1110 830 1190 830 1225 790 1230 840 1280 840 1359 850 1340 865 1250 860 1215 900 1225 960 1150 970 1190 1010 1190 1050 1170 1065 1130 1010 1110 960 1100 910 1000 910 870 940 830 900 810 850 780 820 700 770 620 720 640 680 670 640z"/>
      </g>
      <path class="m-y" d="M815 108L845 102 840 130 820 125z"/>
      <path class="m-crack" d="M700 290L720 320M620 350L700 385M740 620L820 720M600 360L640 470"/>
      <g class="m-lake">
        <ellipse cx="873" cy="356" rx="52" ry="14" transform="rotate(25 873 356)"/>
        <ellipse cx="918" cy="330" rx="15" ry="7" transform="rotate(45 918 330)"/>
        <circle cx="426" cy="392" r="18"/>
        <ellipse cx="529" cy="483" rx="8" ry="20"/>
        <ellipse cx="551" cy="562" rx="28" ry="18" transform="rotate(-15 551 562)"/>
        <ellipse cx="671" cy="850" rx="48" ry="21" transform="rotate(-50 671 850)"/>
        <ellipse cx="1022" cy="1025" rx="25" ry="56" transform="rotate(-3 1022 1025)"/>
      </g>
      <path class="m-b" d="M324 45L333 30 335 40 328 48zM340 78L344 76 343 84zM362 60L370 54 366 62zM1332 590L1340 584 1346 596 1338 598zM1067 480L1085 480 1083 483 1070 483zM1197 1044L1228 1070 1226 1072 1197 1050zM792 972H798V980H792zM942 1125L948 1122 948 1130zM957 1102L964 1103 960 1106zM1327 880L1346 881 1343 884zM1332 762L1338 762 1340 808 1332 798zM902 1027L908 1027 906 1033zM302 296L313 301 309 303zM922 982L943 986 943 993 927 988zM1050 496L1056 496 1056 498 1050 498zM652 567H658V578H654zM40 747L46 749 44 753zM980 277H982V283H980zM417 132H420V136H417z"/>
    </svg>
  </section>

  <section class="style-dock">
    <div class="dock-title">
      <span>Estilo de capas</span>
      <svg class="undock"><use href="#i-undock"/></svg>
    </div>
    <div class="combo layer-combo">
      <svg class="i poly-white"><use href="#i-poly"/></svg>
      <span>Disuelto</span>
      <span class="arr"></span>
    </div>
    <div class="style-body">
      <div class="side-list">
        <span class="side-item side-on"><svg class="i"><use href="#i-layerbrush"/></svg></span>
        <span class="side-item"><svg class="i"><use href="#i-labels"/></svg></span>
        <span class="side-item"><svg class="i"><use href="#i-mask"/></svg></span>
        <span class="side-item"><svg class="i"><use href="#i-cube"/></svg></span>
        <span class="side-item"><svg class="i"><use href="#i-tree"/></svg></span>
        <span class="side-item"><svg class="i"><use href="#i-undored"/></svg></span>
      </div>
      <div class="style-main">
        <div class="crumb">
          <span class="btn"><svg class="i"><use href="#i-back"/></svg></span>
          <span class="crumb-txt">Bofedales</span>
        </div>
        <div class="symbol-row">
          <div class="preview"><span class="preview-sw"></span></div>
          <div class="sym-tree">
            <div class="sym-item sym-top">
              <span class="twist twist-open"></span>
              <span class="sym-sw"></span>
              <b>Relleno</b>
            </div>
            <div class="sym-item sym-sel">
              <span class="sym-sw2"></span>
              <span>Relleno sencillo</span>
            </div>
          </div>
          <div class="sym-btns">
            <span class="btn-s"><svg class="i"><use href="#i-plusw"/></svg></span>
            <span class="btn-s"><svg class="i"><use href="#i-up"/></svg></span>
            <span class="btn-s"><svg class="i"><use href="#i-minusg"/></svg></span>
            <span class="btn-s"><svg class="i"><use href="#i-down"/></svg></span>
            <span class="btn-s"><svg class="i"><use href="#i-dup"/></svg></span>
            <span class="btn-s"><svg class="i"><use href="#i-lock"/></svg></span>
          </div>
        </div>
        <div class="form-wrap">
          <div class="form">
            <div class="type-row">
              <span class="lbl">Tipo de capa del símbolo</span>
              <div class="combo type-combo"><span>Relleno sencillo</span><span class="arr"></span></div>
            </div>
            <div class="fields">
              <span class="lbl">Color de relleno</span>
              <div class="combo color-btn"><span class="color-sw fill-sw"></span><span class="color-drop"><span class="arr"></span></span></div>
              <svg class="dd"><use href="#i-dd"/></svg>

              <span class="lbl">Estilo de relleno</span>
              <div class="combo"><span class="mini-sw"></span><span>Sólido</span><span class="arr"></span></div>
              <svg class="dd"><use href="#i-dd"/></svg>

              <span class="lbl">Color de marca</span>
              <div class="combo color-btn"><span class="color-sw check-sw"></span><span class="color-drop color-drop-flat"><span class="arr"></span></span></div>
              <svg class="dd"><use href="#i-dd"/></svg>

              <span class="lbl">Anchura de marca</span>
              <div class="double">
                <div class="spin spin-w">
                  <span>0.260000</span>
                  <svg class="clear"><use href="#i-clear"/></svg>
                  <span class="updown"><i></i><i></i></span>
                </div>
                <div class="combo unit"><span>Milímetros</span><span class="arr"></span></div>
              </div>
              <svg class="dd"><use href="#i-dd"/></svg>

              <span class="lbl">Estilo de marca</span>
              <div class="combo"><span class="mini-line"></span><span>Línea sólida</span><span class="arr"></span></div>
              <svg class="dd"><use href="#i-dd"/></svg>

              <span class="lbl">Estilo de ángulos</span>
              <div class="combo"><svg class="i bevel"><use href="#i-bevel"/></svg><span>Bisel</span><span class="arr"></span></div>
              <svg class="dd"><use href="#i-dd"/></svg>

              <span class="lbl">Desplazamiento</span>
              <div class="offset">
                <div class="offset-xy">
                  <div class="xy"><span class="lbl xy-l">x</span><div class="spin spin-o"><span>0.000000</span><span class="updown"><i></i><i></i></span></div></div>
                  <div class="xy"><span class="lbl xy-l">y</span><div class="spin spin-o"><span>0.000000</span><span class="updown"><i></i><i></i></span></div></div>
                </div>
                <div class="combo unit"><span>Milímetros</span><span class="arr"></span></div>
              </div>
              <span></span>
            </div>
            <div class="enable-row">
              <span class="chk chk-on"></span>
              <span class="lbl en-lbl">Enable symbol layer</span>
              <svg class="dd en-dd"><use href="#i-dd"/></svg>
              <span class="chk"></span>
              <span class="lbl fx-lbl">Efectos de dibujo</span>
              <span class="btn star-btn"><svg class="i"><use href="#i-star"/></svg></span>
            </div>
          </div>
          <div class="vscroll"><span class="vthumb"></span></div>
        </div>
        <div class="apply-row">
          <span class="btn"><svg class="i"><use href="#i-undo"/></svg></span>
          <span class="btn"><svg class="i"><use href="#i-redo"/></svg></span>
          <span class="chk chk-on live-chk"></span>
          <span class="lbl live-lbl">Actualización en vivo</span>
          <span class="apply"><svg class="i"><use href="#i-check"/></svg><span>Aplicar</span></span>
        </div>
      </div>
    </div>
    <div class="tabs">
      <span class="tab tab-1"><span>zetsaka : classification tool</span></span>
      <span class="tab tab-2"><span>lavegado</span></span>
      <span class="tab tab-on"><span>stilo de capa</span></span>
      <span class="tab tab-4"><span>aja de herramientas de Proceso</span></span>
    </div>
  </section>
</div>

<div class="statusbar">
  <div class="locator">
    <svg class="i"><use href="#i-search"/></svg>
    <span>Escriba para localizar (Ctrl+K)</span>
  </div>
  <span class="st-msg">Alterna el estado de edición de la capa activa</span>
  <span class="st-lbl st-coord">Coordenada</span>
  <span class="st-box">487909,8690517</span>
  <svg class="i st-mouse"><use href="#i-mouse"/></svg>
  <span class="st-lbl st-esc">Escala</span>
  <div class="st-combo st-scale"><span>1:89897</span><span class="arr"></span></div>
  <svg class="i st-lock"><use href="#i-padlock"/></svg>
  <span class="st-lbl st-amp">Amplificador</span>
  <div class="st-combo st-mag"><span>100%</span><span class="updown"><i></i><i></i></span></div>
  <span class="st-lbl st-rot">Rotación</span>
  <div class="st-combo st-rotv"><span>0.0 °</span><span class="updown"><i></i><i></i></span></div>
  <span class="chk chk-on st-chk"></span>
  <span class="st-lbl st-ren">Representar</span>
  <svg class="i st-globe"><use href="#i-epsg"/></svg>
  <span class="st-lbl">EPSG:32718</span>
  <svg class="i st-chat"><use href="#i-chat"/></svg>
</div>

</body>
</html>
```

FILE: styles.css
```css
*{
  box-sizing: border-box;
}
html, body{
  margin: 0;
  height: 100%;
}
body{
  width: 1366px;
  height: 768px;
  overflow: hidden;
  background: #333;
  color: #a3a8a8;
  font-family: "Noto Sans", "Open Sans", sans-serif;
  font-size: 11px;
  line-height: 1;
}
.sprite{
  display: none;
}
.i{
  display: block;
  width: 16px;
  height: 16px;
  flex: none;
}

/* svg text inside the icons */
.tiny{ font: 5px "Liberation Sans", sans-serif; fill: #666; }
.tinyb{ font: bold 5.5px "Liberation Sans", sans-serif; fill: #222; }
.tinyr{ font: bold 5px "Liberation Sans", sans-serif; fill: #d33; }
.tinyd{ font: bold 5.5px "Liberation Sans", sans-serif; fill: #6a6a6a; }
.tinym{ font: bold 6px "Liberation Sans", sans-serif; fill: #333; }
.helpq{ font: bold 10px "Liberation Sans", sans-serif; fill: #dde; }

/* text sits a pixel above the box centre in the Qt theme */
.tk-text,
.menubar span,
.combo > span:not(.arr):not(.mini-sw):not(.mini-line):not(.color-sw):not(.color-drop),
.spin > span:first-child,
.ly-name,
.lbl,
.crumb-txt,
.apply span,
.st-lbl,
.st-msg,
.st-combo > span:first-child,
.locator span{
  margin-bottom: 2px;
}

/* desktop panel */
.taskbar{
  display: flex;
  align-items: center;
  height: 28px;
  background: #000;
  border-bottom: 1px solid #333;
}
.tk-kde{ margin-left: 6px; }
.tk-dots{
  width: 2px;
  height: 10px;
  margin-left: 7px;
  background: repeating-linear-gradient(#888 0 2px, transparent 2px 4px);
}
.tk-chrome{ margin-left: 7px; }
.tk-text{
  color: #565656;
  font-size: 11px;
  white-space: nowrap;
}
.tk-goog{ width: 172px; margin-left: 9px; }
.tk-active{
  display: flex;
  align-items: center;
  width: 200px;
  height: 27px;
  padding: 4px 0 0 3px;
  background: #fff;
  border-top: 4px solid #2a7de1;
  color: #111;
  white-space: nowrap;
}
.tk-active .i{ margin: -4px 9px 0 0; }
.tk-active span{ margin-top: -6px; }
.tk-term{
  width: 16px;
  height: 15px;
  margin-left: 3px;
  background: #444;
  color: #fff;
  font: bold 9px/15px "Liberation Mono", monospace;
  text-align: center;
}
.tk-termtxt{ width: 174px; margin-left: 9px; }
.tk-data{ width: 505px; margin-left: 10px; }
.tk-clock{ width: 100px; margin-left: 8px; }
.tk-bat{ margin-left: 11px; }
.tk-net{ margin-left: 11px; }

.titlebar{
  position: relative;
  height: 27px;
  padding-right: 59px;
  background: #000;
  color: #eee;
  font-weight: bold;
  font-size: 12px;
  line-height: 27px;
  letter-spacing: .13px;
  text-align: center;
}
.winbtns{
  position: absolute;
  top: 6px;
  right: 1px;
  display: flex;
  gap: 8px;
}
.dot{
  width: 14px;
  height: 14px;
  border-radius: 50%;
}
.dot-o{ background: #f07800; }
.dot-b{ background: #3a78ea; }
.dot-r{ background: #d81c1c; }

.menubar{
  display: flex;
  gap: 14.4px;
  align-items: center;
  height: 22px;
  padding-left: 10px;
  color: #a0a5a5;
}

.toolbar{
  display: flex;
  align-items: center;
  height: 27px;
  padding-left: 1px;
}
.tb-two{
  margin: 3px 0 1px;
}
.tb{
  display: flex;
  align-items: center;
  justify-content: center;
  width: 26px;
  height: 24px;
  flex: none;
}
.tb-on{
  border: 1px solid #c87a1c;
}
.tb-sep{
  position: relative;
  width: 8px;
  height: 20px;
  flex: none;
}
.tb-sep::after{
  content: "";
  display: block;
  width: 1px;
  height: 16px;
  margin: 2px 0 0 3px;
  background: #4c4c4c;
}
.toolbar .tb-sep:first-child{
  width: 4px;
}
.tb-sep-9{ width: 9px; }
.tb-sep-thin{ width: 6px; }
.tb-sep-2{ width: 2px; }
.tb-sep-2::after{ margin-left: 0; }
.tb-arr{
  width: 11px;
  height: 24px;
  flex: none;
  display: flex;
  align-items: center;
  justify-content: center;
}
.tb-arr-13{ width: 13px; }
.tb-two .tb-arr{ width: 12px; }
.tb-arr::after{
  content: "";
  border-left: 2.5px solid transparent;
  border-right: 2.5px solid transparent;
  border-top: 4px solid #aaa;
}

/* main area */
.main{
  display: grid;
  grid-template-columns: 373px 475px 518px;
  height: 603px;
}
.dock-title{
  position: relative;
  height: 24px;
  padding-right: 26px;
  line-height: 24px;
  text-align: center;
  color: #8f9494;
}
.undock{
  position: absolute;
  top: 6px;
  right: 3px;
  width: 10px;
  height: 10px;
}

.layers{
  width: 366px;
}
.layer-tools{
  display: flex;
  align-items: center;
  height: 25px;
  padding-left: 3px;
}
.layer-tools .tb{
  height: 25px;
}
.layer-tools .tb-wide{ width: 28px; }
.tb-arr-s{ width: 9px; }
.tree{
  height: 551px;
  margin-top: 3px;
  padding: 1px;
  background: #202020;
  border-top: 1px solid #4d4d4d;
  border-left: 1px solid #2c2c2c;
}
.row{
  display: flex;
  align-items: center;
  height: 24px;
}
.row-sel{
  background: #0f6b00;
}
.row-child{
  margin-left: 40px;
  border-bottom: 2px solid #2e2e2e;
}
.row-top{
  background: linear-gradient(#2e2e2e, #2e2e2e) no-repeat 20px bottom / 100% 2px;
}
.twist{
  width: 0;
  height: 0;
  margin: 0 9px 0 7px;
  border-top: 4.5px solid transparent;
  border-bottom: 4.5px solid transparent;
  border-left: 6px solid #5e5e5e;
}
.twist-open{
  margin: 0 9px 0 6px;
  border-left: 4.5px solid transparent;
  border-right: 4.5px solid transparent;
  border-top: 6px solid #4e7a48;
  border-bottom: 0;
}
.twist-none{
  border-left-color: transparent;
}
.eye{
  margin-right: 5px;
}
.row-child .eye{
  margin-left: 2px;
}
.ly-name{
  margin-left: 6px;
  color: #b9c4cc;
  font-weight: bold;
}
.row-sel .ly-name{
  margin-left: 5px;
}
.ly-cur{
  color: #e8efe4;
  text-decoration: underline;
}
.ly-sub{
  margin-left: 6px;
  color: #a6b2b6;
}
.poly-tan{
  color: #dcb992;
}
.poly-white{
  color: #dedede;
}
.memory{
  width: 20px;
  height: 21px;
  margin-left: auto;
  margin-right: 3px;
}
.ind{
  width: 2px;
  height: 19px;
  margin-left: auto;
  margin-right: 1px;
  background: #5a5a5a;
}
.row-sel .ind{
  margin-left: 0;
  background: #3f7f35;
}
.sw{
  width: 18px;
  height: 18px;
}
.sw-yellow{ background: #ffff66; }
.sw-green{ background: #75dd15; }
.sw-white{ background: #fff; }
.sw-blue{ background: #00f; }

.canvas{
  height: 599px;
  margin-top: 4px;
  padding-bottom: 1px;
  background: #fff;
  display: flex;
  align-items: center;
  justify-content: center;
}
.map{
  display: block;
  width: 453px;
  height: 392px;
}
.m-y{ fill: #ffff66; }
.m-g{ fill: #75dd15; }
.m-w{ fill: #fff; }
.m-lake{ fill: #00f; }
.m-b{ fill: #00f; stroke: #00f; stroke-width: 3; stroke-linejoin: round; }
.m-crack{ fill: none; stroke: #ffff66; stroke-width: 3; }

/* layer styling dock */
.style-dock{
  padding: 0 3px;
  margin-left: 7px;
  width: 511px;
}
.combo{
  display: flex;
  align-items: center;
  height: 24px;
  padding: 0 4px;
  background: linear-gradient(#565656, #434343);
  border: 1px solid #1e1e1e;
  color: #999;
  white-space: nowrap;
}
.arr{
  width: 0;
  height: 0;
  margin-left: auto;
  margin-right: 2px;
  border-left: 2.5px solid transparent;
  border-right: 2.5px solid transparent;
  border-top: 4px solid #ccc;
  flex: none;
}
.layer-combo{
  width: 505px;
}
.layer-combo .i{
  margin: 0 5px 0 0;
}
.style-body{
  display: flex;
  gap: 4px;
  height: 523px;
  margin-top: 6px;
}
.side-list{
  width: 37px;
  height: 519px;
  padding: 1px;
  background: #202020;
  border: 1px solid #555;
}
.side-item{
  display: flex;
  align-items: center;
  justify-content: center;
  height: 22px;
}
.side-on{
  background: #0f6b00;
}
.style-main{
  width: 464px;
}
.crumb{
  display: flex;
  align-items: center;
  gap: 10px;
  color: #8f9494;
}
.btn{
  display: flex;
  align-items: center;
  justify-content: center;
  width: 24px;
  height: 24px;
  background: #4a4a4a;
  border: 1px solid #1e1e1e;
  flex: none;
}
.symbol-row{
  display: flex;
  height: 112px;
  margin-top: 7px;
}
.preview{
  width: 118px;
  padding: 26px 0 0 26px;
}
.preview-sw{
  display: block;
  width: 61px;
  height: 61px;
  background: #75dd15;
  border: 1px solid #5cab14;
}
.sym-tree{
  width: 278px;
  padding: 1px 1px;
  background: #202020;
  border: 1px solid #666;
}
.sym-item{
  display: flex;
  align-items: center;
  height: 18px;
  color: #e0e4e4;
}
.sym-top{
  height: 18px;
}
.sym-item .twist-open{
  margin: 0 9px 0 6px;
  border-top-color: #666;
}
.sym-sw{
  width: 16px;
  height: 16px;
  margin-right: 6px;
  background: #75dd15;
}
.sym-sel{
  margin-right: 2px;
  padding-left: 43px;
  background: #0f6b00;
  color: #b7d2a8;
}
.sym-sw2{
  width: 16px;
  height: 16px;
  margin-right: 6px;
  background: #93bf1a;
}
.sym-sel span:last-child{
  margin-bottom: 1px;
}
.sym-btns{
  display: grid;
  grid-template-columns: 28px 28px;
  grid-auto-rows: 24px;
  gap: 4px 6px;
  margin-left: 6px;
}
.btn-s{
  display: flex;
  align-items: center;
  justify-content: center;
  background: #3a3a3a;
  border: 1px solid #222;
}
.form-wrap{
  display: flex;
  height: 324px;
  margin-top: 16px;
}
.form{
  width: 446px;
}
.lbl{
  color: #a0a6a6;
  white-space: nowrap;
}
.type-row{
  display: flex;
  align-items: center;
  gap: 1px;
  padding-left: 1px;
}
.type-combo{
  width: 316px;
  margin-left: auto;
  padding-left: 3px;
}
.fields{
  display: grid;
  grid-template-columns: 100px 291px 32px;
  grid-template-rows: 26px 24px 26px 24px 24px 24px 53px;
  row-gap: 8px;
  align-items: center;
  padding-left: 10px;
  margin-top: 13px;
}
.fields > .combo{
  height: 100%;
  width: 291px;
}
.dd{
  width: 23px;
  height: 16px;
  margin-left: 9px;
}
.color-btn{
  padding: 0 0 0 2px;
}
.color-sw{
  width: 273px;
  height: 15px;
  border-radius: 2px;
}
.fill-sw{
  background: #75dd15;
}
.check-sw{
  background: repeating-conic-gradient(#c8c8c8 0 25%, #fff 0 50%) 0 0 / 8px 8px;
}
.color-drop{
  display: flex;
  align-items: center;
  flex: 1;
  height: 100%;
  padding-right: 2px;
  border-left: 1px solid #222;
}
.color-drop-flat{
  border-left: 0;
}
.mini-sw{
  width: 32px;
  height: 16px;
  margin-right: 6px;
  background: #5e5e5e;
}
.mini-line{
  width: 32px;
  height: 2px;
  margin-right: 5px;
  background: #000;
}
.bevel{
  width: 14px;
  height: 16px;
  margin-right: 7px;
}
.double{
  display: flex;
  justify-content: space-between;
}
.spin{
  display: flex;
  align-items: center;
  height: 24px;
  padding: 0 4px;
  background: linear-gradient(#4a4a4a, #404040);
  border: 1px solid #1e1e1e;
  color: #999;
}
.spin-w{
  width: 146px;
}
.clear{
  width: 14px;
  height: 10px;
  margin-left: auto;
  margin-right: 14px;
}
.updown{
  display: flex;
  flex-direction: column;
  gap: 6px;
  margin-left: auto;
  margin-right: 2px;
  flex: none;
}
.clear + .updown{
  margin-left: 0;
}
.updown i{
  display: block;
  width: 0;
  height: 0;
  border-left: 2.5px solid transparent;
  border-right: 2.5px solid transparent;
  border-bottom: 4px solid #aaa;
}
.updown i:last-child{
  border-bottom: 0;
  border-top: 4px solid #aaa;
}
.unit{
  width: 139px;
}
.offset{
  display: flex;
  justify-content: space-between;
  align-items: center;
  width: 291px;
}
.offset-xy{
  display: flex;
  flex-direction: column;
  gap: 7px;
}
.xy{
  display: flex;
  align-items: center;
}
.xy-l{
  width: 12px;
}
.spin-o{
  width: 134px;
  height: 23px;
}
.enable-row{
  display: flex;
  align-items: center;
  height: 25px;
  margin-top: 12px;
  padding-left: 2px;
}
.chk{
  width: 13px;
  height: 13px;
  background: #4f4f4f;
  flex: none;
}
.chk-on{
  background: #0f6b00;
}
.en-lbl{
  margin-left: 7px;
}
.en-dd{
  margin: 0 40px 0 12px;
}
.fx-lbl{
  margin-left: 7px;
}
.star-btn{
  width: 25px;
  height: 25px;
  margin-left: 7px;
  background: #3a3a3a;
}
.vscroll{
  display: flex;
  flex-direction: column;
  justify-content: flex-end;
  width: 8px;
  height: 324px;
  margin-left: 10px;
  border: 1px solid #444;
  border-bottom: 0;
}
.vthumb{
  display: block;
  height: 11px;
  margin: 0 -1px;
  background: #5a5a5a;
}
.apply-row{
  display: flex;
  align-items: center;
  gap: 7px;
  height: 25px;
  margin-top: 12px;
}
.live-chk{
  margin-left: 203px;
}
.apply{
  display: flex;
  align-items: center;
  gap: 6px;
  width: 64px;
  height: 24px;
  margin-left: auto;
  padding-left: 4px;
  border: 1px solid #1e1e1e;
  color: #b8b8b8;
}
.tabs{
  display: flex;
  align-items: flex-start;
  width: 511px;
  height: 26px;
  margin: 0 0 0 -3px;
  color: #a0a6a6;
}
.tab{
  display: block;
  height: 21px;
  line-height: 20px;
  border-bottom: 1px solid #555;
  white-space: nowrap;
  overflow: hidden;
  flex: none;
}
.tab span{
  display: block;
  overflow: hidden;
}
.tab-1{
  width: 157px;
  padding: 0 12px 0 14px;
  border-left: 1px solid #555;
  border-right: 1px solid #555;
}
.tab-2{
  width: 72px;
  padding: 0 11px 0 13px;
}
.tab-on{
  width: 91px;
  height: 26px;
  padding: 3px 0 0 13px;
  border: 1px solid #555;
  border-top: 0;
}
.tab-4{
  width: 191px;
  padding-left: 15px;
}

/* status bar */
.statusbar{
  display: flex;
  align-items: center;
  height: 30px;
  padding-left: 4px;
  font-size: 9px;
}
.locator{
  display: flex;
  align-items: center;
  gap: 6px;
  width: 270px;
  height: 23px;
  padding-left: 8px;
  background: #7c7c7c;
  border: 1px solid #111;
  color: #4c4c4c;
  font-size: 11px;
}
.st-msg{
  width: 296px;
  margin-left: 10px;
  color: #4e4e4e;
  letter-spacing: .13px;
}
.st-lbl{
  color: #a0a6a6;
  letter-spacing: -.4px;
  white-space: nowrap;
}
.st-coord{
  width: 50px;
}
.st-box{
  width: 83px;
  height: 22px;
  background: #7a7a7a;
  border: 1px solid #111;
  color: #2c2c2c;
  letter-spacing: -.6px;
  line-height: 19px;
  text-align: center;
}
.st-mouse{
  margin: 0 14px 0 4px;
}
.st-esc{
  width: 28px;
}
.st-combo{
  display: flex;
  align-items: center;
  height: 23px;
  padding: 0 6px;
  background: linear-gradient(#4e4e4e, #414141);
  border: 1px solid #1e1e1e;
  color: #8a8a8a;
  letter-spacing: -.3px;
}
.st-scale{
  width: 87px;
}
.st-lock{
  margin: 0 8px 0 12px;
}
.st-amp{
  width: 52px;
}
.st-mag{
  width: 87px;
}
.st-rot{
  width: 42px;
  margin-left: 10px;
}
.st-rotv{
  width: 83px;
}
.st-chk{
  margin: 0 7px 0 8px;
}
.st-ren{
  width: 59px;
}
.st-globe{
  margin-right: 2px;
}
.st-chat{
  margin-left: auto;
  margin-right: 8px;
}
```
